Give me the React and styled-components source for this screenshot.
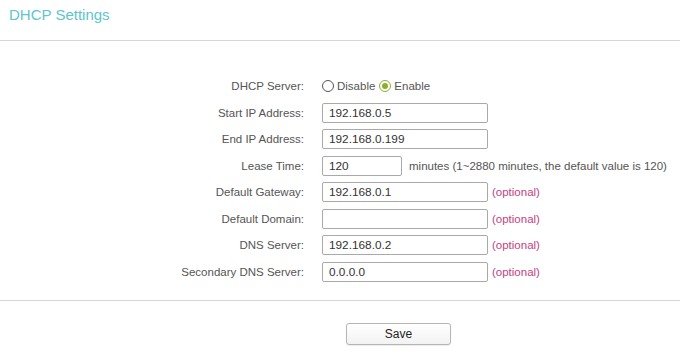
import React from "react";
import styled, { createGlobalStyle } from "styled-components";

const GlobalStyle = createGlobalStyle`
  body {
    margin: 0;
    background: #fff;
    font-family: "Liberation Sans", Arial, sans-serif;
  }
`;

const Page = styled.div`
  width: 680px;
  height: 357px;
  background: #fff;
  overflow: hidden;
`;

const Title = styled.h2`
  margin: 0;
  padding: 6px 0 0 9px;
  height: 34px;
  font-size: 15px;
  font-weight: normal;
  line-height: 18px;
  color: #5ec5cc;
  border-bottom: 1px solid #d6d6d6;
`;

const Form = styled.div`
  display: grid;
  grid-template-columns: 304px auto;
  column-gap: 18px;
  grid-auto-rows: 26.5px;
  padding: 32px 0 15px;
  border-bottom: 1px solid #d6d6d6;
`;

const Label = styled.div`
  text-align: right;
  font-size: 11.5px;
  color: #555;
  display: flex;
  align-items: center;
  justify-content: flex-end;
`;

const Field = styled.div`
  display: flex;
  align-items: center;
  font-size: 11.5px;
  color: #555;
`;

const Input = styled.div`
  box-sizing: border-box;
  width: ${(p) => p.$w || 166}px;
  height: 20px;
  border: 1px solid #a9a9a9;
  border-radius: 2px;
  padding: 0 6px;
  font-size: 11.8px;
  line-height: 18px;
  color: #333;
`;

const Note = styled.span`
  margin-left: ${(p) => p.$gap || 4}px;
  color: ${(p) => (p.$pink ? "#c2417f" : "#555")};
`;

const Radio = styled.span`
  box-sizing: border-box;
  width: 12px;
  height: 12px;
  border-radius: 50%;
  border: 1px solid ${(p) => (p.$on ? "#8caf2f" : "#555")};
  margin-right: 3px;
  margin-left: ${(p) => p.$ml || 0}px;
  display: inline-flex;
  align-items: center;
  justify-content: center;
  &::after {
    content: "";
    width: 6px;
    height: 6px;
    border-radius: 50%;
    background: ${(p) => (p.$on ? "#8caf2f" : "transparent")};
  }
`;

const Footer = styled.div`
  padding: 22px 0 0 346px;
`;

const SaveButton = styled.button`
  width: 105px;
  height: 22px;
  border: 1px solid #b5b5b5;
  border-radius: 3px;
  background: linear-gradient(#ffffff, #f2f2f2);
  box-shadow: 0 1px 1px rgba(0, 0, 0, 0.08);
  font-family: "Liberation Sans", Arial, sans-serif;
  font-size: 12px;
  color: #222;
`;

const rows = [
  { label: "Start IP Address:", value: "192.168.0.5" },
  { label: "End IP Address:", value: "192.168.0.199" },
  { label: "Lease Time:", value: "120", width: 80, note: "minutes (1~2880 minutes, the default value is 120)" },
  { label: "Default Gateway:", value: "192.168.0.1", optional: true },
  { label: "Default Domain:", value: "", optional: true },
  { label: "DNS Server:", value: "192.168.0.2", optional: true },
  { label: "Secondary DNS Server:", value: "0.0.0.0", optional: true },
];

export default function App() {
  return (
    <Page>
      <GlobalStyle />
      <Title>DHCP Settings</Title>
      <Form>
        <Label>DHCP Server:</Label>
        <Field>
          <Radio />
          Disable
          <Radio $on $ml={4} />
          Enable
        </Field>
        {rows.map((r) => (
          <React.Fragment key={r.label}>
            <Label>{r.label}</Label>
            <Field>
              <Input $w={r.width}>{r.value}</Input>
              {r.note && <Note $gap={7}>{r.note}</Note>}
              {r.optional && <Note $pink>(optional)</Note>}
            </Field>
          </React.Fragment>
        ))}
      </Form>
      <Footer>
        <SaveButton>Save</SaveButton>
      </Footer>
    </Page>
  );
}
